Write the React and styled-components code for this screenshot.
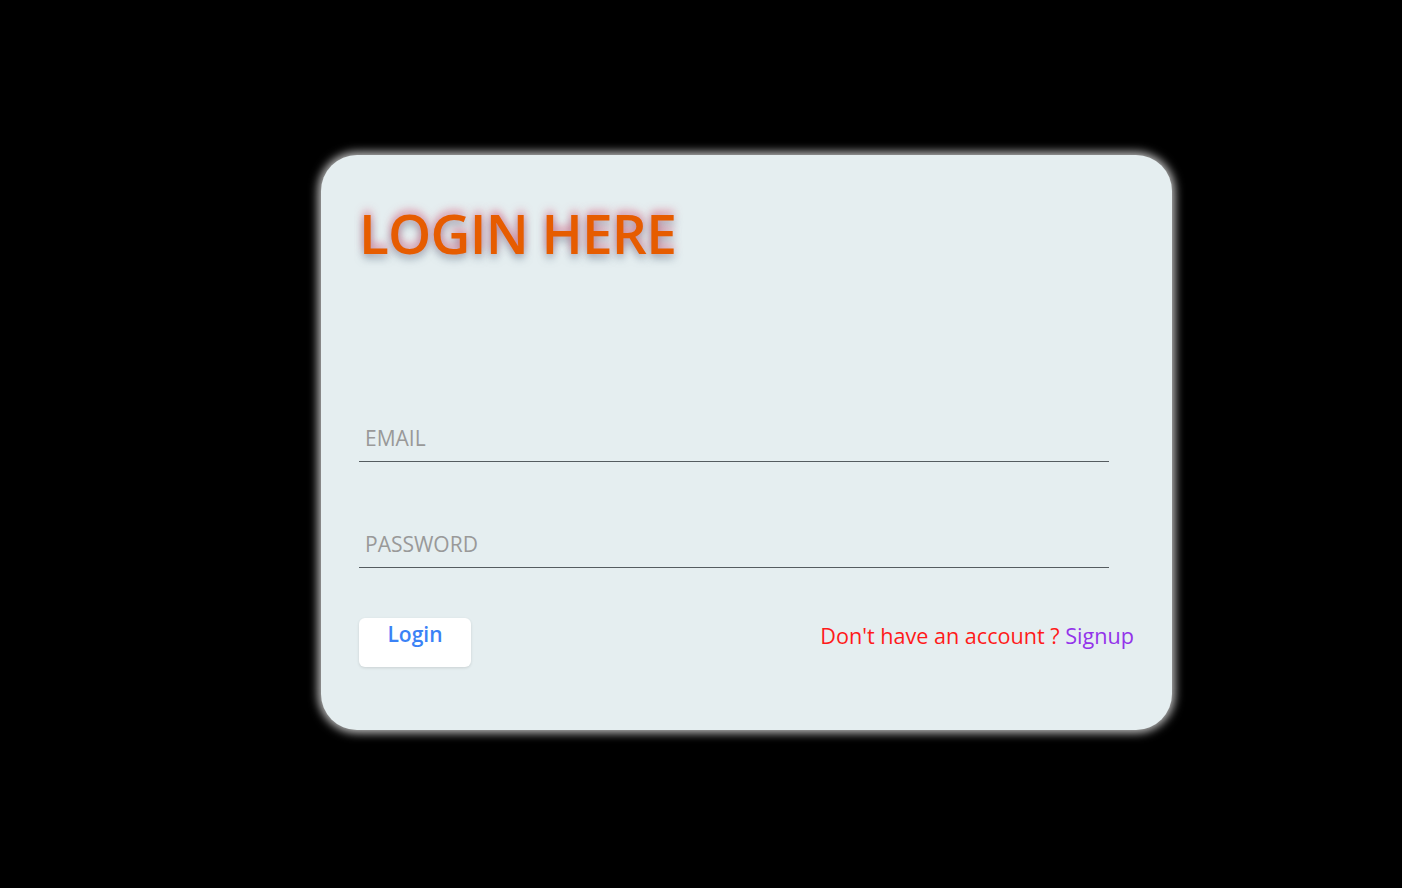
import styled, { createGlobalStyle } from 'styled-components';

const GlobalStyle = createGlobalStyle`
  html, body {
    margin: 0;
    padding: 0;
    background: #000;
    font-family: 'Open Sans', 'Noto Sans', sans-serif;
  }
`;

const Page = styled.div`
  min-height: 888px;
  box-sizing: border-box;
  display: flex;
  align-items: center;
  padding: 0 0 3px 321px;
`;

const Card = styled.div`
  width: 851px;
  height: 575px;
  box-sizing: border-box;
  background: #e5eef0;
  border-radius: 36px;
  box-shadow: 0 0 10px 3px rgba(255, 255, 255, 0.75);
  padding: 40px 38px 0 38px;
  display: flex;
  flex-direction: column;
`;

const Title = styled.h1`
  margin: 0;
  font-size: 55px;
  font-weight: 600;
  color: #e65c00;
  text-shadow: 0 -4px 9px rgba(220, 100, 130, 0.7), 0 4px 9px rgba(90, 110, 130, 0.6);
  letter-spacing: -0.8px;
`;

const Form = styled.form`
  margin-top: 145px;
  display: flex;
  flex-direction: column;
  gap: 59px;
`;

const Input = styled.input`
  width: 750px;
  box-sizing: border-box;
  border: none;
  border-bottom: 1px solid #555c60;
  background: transparent;
  padding: 9px 6px 9px;
  font-family: inherit;
  font-size: 21px;
  outline: none;
  &::placeholder {
    color: #999;
  }
`;

const Footer = styled.div`
  margin-top: 50px;
  display: flex;
  justify-content: space-between;
  align-items: flex-start;
`;

const LoginButton = styled.button`
  width: 112px;
  height: 49px;
  border: none;
  border-radius: 6px;
  background: #fff;
  color: #3b82f6;
  font-family: inherit;
  font-size: 21px;
  font-weight: 600;
  padding: 2px 0 0;
  display: flex;
  justify-content: center;
  align-items: flex-start;
  box-shadow: 0 1px 3px rgba(0, 0, 0, 0.12);
`;

const Prompt = styled.p`
  margin: 3px 0 0;
  font-size: 21.6px;
  color: #ff1a1a;
`;

const SignupLink = styled.a`
  color: #9333ea;
  text-decoration: none;
`;

export default function App() {
  return (
    <>
      <GlobalStyle />
      <Page>
        <Card>
          <Title>LOGIN HERE</Title>
          <Form onSubmit={(e) => e.preventDefault()}>
            <Input type="email" placeholder="EMAIL" />
            <Input type="password" placeholder="PASSWORD" />
          </Form>
          <Footer>
            <LoginButton type="button">Login</LoginButton>
            <Prompt>
              Don't have an account ? <SignupLink href="#">Signup</SignupLink>
            </Prompt>
          </Footer>
        </Card>
      </Page>
    </>
  );
}
